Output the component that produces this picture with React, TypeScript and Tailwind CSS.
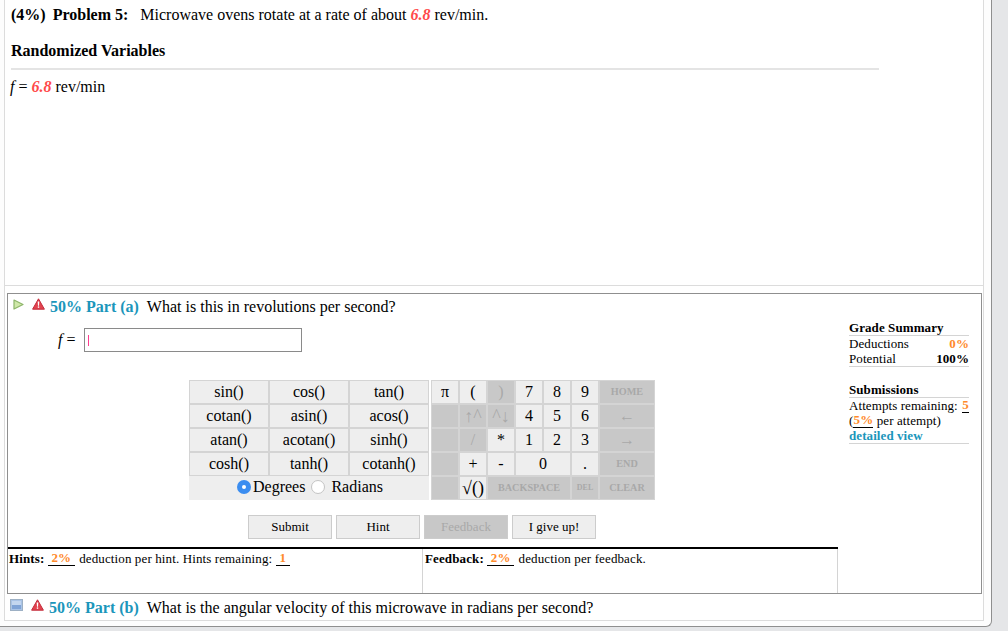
const FUNCS = [
  'sin()', 'cos()', 'tan()',
  'cotan()', 'asin()', 'acos()',
  'atan()', 'acotan()', 'sinh()',
  'cosh()', 'tanh()', 'cotanh()',
];

const KEYS = [
  { label: 'π', on: true },
  { label: '(', on: true },
  { label: ')', on: false },
  { label: '7', on: true },
  { label: '8', on: true },
  { label: '9', on: true },
  { label: 'HOME', on: false, small: true },
  { label: '', on: false },
  { label: '↑^', on: false, big: true },
  { label: '^↓', on: false, big: true },
  { label: '4', on: true },
  { label: '5', on: true },
  { label: '6', on: true },
  { label: '←', on: false },
  { label: '', on: false },
  { label: '/', on: false },
  { label: '*', on: true },
  { label: '1', on: true },
  { label: '2', on: true },
  { label: '3', on: true },
  { label: '→', on: false },
  { label: '', on: false },
  { label: '+', on: true },
  { label: '-', on: true },
  { label: '0', on: true, wide: true },
  { label: '.', on: true },
  { label: 'END', on: false, small: true },
  { label: '', on: false },
  { label: '√()', on: true, big: true },
  { label: 'BACKSPACE', on: false, small: true, span3: true },
  { label: 'DEL', on: false, tiny: true },
  { label: 'CLEAR', on: false, small: true },
];

function PlayIcon() {
  return (
    <svg width="11" height="11" viewBox="0 0 11 11" className="shrink-0 mb-[5px]">
      <path d="M1 1 L10 5.5 L1 10 Z" fill="#cfe8a8" stroke="#8db56a" strokeWidth="1.2" strokeLinejoin="round" />
    </svg>
  );
}

function WarnIcon() {
  return (
    <svg width="13" height="12" viewBox="0 0 13 12" className="block shrink-0">
      <path d="M6.5 0.8 L12.4 11.2 L0.6 11.2 Z" fill="#e2434f" stroke="#c22a3a" strokeWidth="1" strokeLinejoin="round" />
      <path d="M5.7 3.4 H7.3 L7 7.8 H6 Z" fill="#fff" />
      <rect x="5.8" y="8.4" width="1.4" height="1.4" fill="#fff" />
    </svg>
  );
}

function BoxIcon() {
  return (
    <svg width="13" height="12" viewBox="0 0 13 12" className="block shrink-0 mb-[6px]">
      <rect x="0.5" y="0.5" width="12" height="11" fill="#a9c3e6" stroke="#9db0c4" />
      <rect x="2" y="2" width="9" height="4" fill="#c3d6ef" />
      <rect x="2" y="6" width="9" height="4" fill="#7fa3d6" />
    </svg>
  );
}

function Orange({ children }: { children: React.ReactNode }) {
  return <span className="font-bold text-[#ff8a2b]">{children}</span>;
}

function Under({ children, w }: { children: React.ReactNode; w: string }) {
  return (
    <span className={`inline-block h-[15px] border-b border-black text-center font-bold text-[#ff8a2b] leading-[14px] align-top ${w}`}>
      {children}
    </span>
  );
}

function Keypad() {
  return (
    <div className="ml-[181px] mt-[28px] flex gap-[2px]">
      <div className="w-[240px]">
        <div className="grid grid-cols-3">
          {FUNCS.map((f) => (
            <div key={f} className="h-[24px] border border-[#d4d4d4] bg-[#eeeeee] flex items-center justify-center text-[16px] leading-none">
              {f}
            </div>
          ))}
        </div>
        <div className="h-[24px] bg-[#eeeeee] flex items-center justify-center text-[16px] pb-[2px] pl-[2px]">
          <span className="w-[14px] h-[14px] rounded-full bg-[#3b8df0] flex items-center justify-center mr-[2px]">
            <span className="w-[4px] h-[4px] rounded-full bg-white" />
          </span>
          <span>Degrees</span>
          <span className="w-[14px] h-[14px] rounded-full bg-white border border-[#c4c4c4] ml-[6px] mr-[6px]" />
          <span>Radians</span>
        </div>
      </div>
      <div className="w-[224px] grid grid-cols-[28px_28px_28px_28px_28px_28px_56px] auto-rows-[24px]">
        {KEYS.map((k, i) => (
          <div
            key={i}
            className={`border border-[#d4d4d4] flex items-center justify-center leading-none whitespace-nowrap ${k.wide ? 'col-span-2' : ''} ${k.span3 ? 'col-span-3' : ''} ${k.on ? 'bg-[#eeeeee] text-black' : 'bg-[#c8c8c8] text-[#a8a8a8]'} ${k.tiny ? 'text-[8px] font-bold' : k.small ? 'text-[10.2px] font-bold' : k.big ? 'text-[18px]' : 'text-[16px]'}`}
          >
            {k.label}
          </div>
        ))}
      </div>
    </div>
  );
}

function ActionButton({ label, off }: { label: string; off?: boolean }) {
  return (
    <div className={`w-[84px] h-[24px] border border-[#cccccc] flex items-center justify-center text-[13px] ${off ? 'bg-[#c8c8c8] text-[#a8a8a8]' : 'bg-[#eeeeee]'}`}>
      {label}
    </div>
  );
}

export default function App() {
  return (
    <div className="w-[1008px] h-[631px] bg-[#e5e6e8] overflow-hidden font-['Liberation_Serif',serif] text-black">
      <div className="w-[992px] h-[627px] bg-[#fdfdfd] border-r border-b border-[#8f8f8f] rounded-br-[6px] pl-[4px] pr-[7px]">
        <div className="h-[621px] bg-white border-l border-r border-b border-[#dcdcdc]">
          <div className="h-[286px] border-b border-[#dcdcdc] pl-[6px]">
            <p className="pt-[6px] text-[16px] leading-[18px] whitespace-nowrap">
              <b>(4%)</b>
              <b className="ml-[7px]">Problem 5:</b>
              <span className="ml-[12px]">Microwave ovens rotate at a rate of about </span>
              <b className="italic text-[#ff4a4a]">6.8</b> rev/min.
            </p>
            <h2 className="mt-[18px] text-[16px] leading-[18px] font-bold">Randomized Variables</h2>
            <div className="mt-[8px] mr-[104px] h-[2px] bg-[#e4e4e4]" />
            <p className="mt-[8px] ml-[-1px] text-[16px] leading-[18px]">
              <i>f</i> = <b className="italic text-[#ff4a4a]">6.8</b> rev/min
            </p>
          </div>

          <div className="mt-[7px] ml-[2px] mr-[1px] h-[301px] border border-[#8f8f8f] flex">
            <div className="w-[830px] flex flex-col">
              <div className="h-[24px] flex items-center pl-[5px] pt-[2px] text-[16px] whitespace-nowrap">
                <PlayIcon />
                <span className="ml-[8px] mb-[6px]"><WarnIcon /></span>
                <b className="ml-[5px] text-[#1b96bb]">50% Part (a)</b>
                <span className="ml-[8px]">What is this in revolutions per second?</span>
              </div>
              <div className="mt-[10px] flex items-center h-[24px] pl-[50px] text-[16px]">
                <span><i>f</i> =</span>
                <div className="ml-[9px] w-[218px] h-[24px] border border-[#8a8a8a] flex items-center pl-[3px]">
                  <span className="w-px h-[11px] bg-[#ff3d8f]" />
                </div>
              </div>
              <Keypad />
              <div className="mt-[15px] ml-[240px] flex gap-[4px]">
                <ActionButton label="Submit" />
                <ActionButton label="Hint" />
                <ActionButton label="Feedback" off />
                <ActionButton label="I give up!" />
              </div>
              <div className="mt-[8px] flex-1 border-t-[2px] border-black flex text-[13px] leading-[15px] tracking-[0.12px]">
                <div className="w-[415px] pl-[1px] pt-[2px] border-r border-[#d4d4d4] whitespace-nowrap">
                  <b>Hints:</b> <Under w="w-[27px]">2%</Under> <span className="ml-[1px]">deduction per hint. Hints remaining:</span> <Under w="w-[14px]">1</Under>
                </div>
                <div className="flex-1 pl-[2px] pt-[2px] border-r border-[#d4d4d4] whitespace-nowrap">
                  <b>Feedback:</b> <Under w="w-[27px]">2%</Under> <span className="ml-[1px]">deduction per feedback.</span>
                </div>
              </div>
            </div>
            <div className="flex-1 pl-[11px] pr-[12px] pt-[26px] text-[13px] leading-[15px] tracking-[0.08px]">
              <div className="font-bold border-b border-[#d4d4d4]">Grade Summary</div>
              <div className="flex justify-between"><span>Deductions</span><Orange>0%</Orange></div>
              <div className="flex justify-between border-b border-[#d4d4d4]"><span>Potential</span><b>100%</b></div>
              <div className="mt-[15px] font-bold border-b border-[#d4d4d4]">Submissions</div>
              <div className="flex justify-between h-[15px]">
                <span>Attempts remaining:</span><Under w="w-[7px]">5</Under>
              </div>
              <div className="h-[15px]">(<Under w="w-[20px]">5%</Under> per attempt)</div>
              <div className="font-bold text-[#1b96bb] border-b border-[#d4d4d4]">detailed view</div>
            </div>
          </div>

          <div className="h-[27px] flex items-center pl-[5px] text-[16px] whitespace-nowrap">
            <BoxIcon />
            <span className="ml-[8px] mb-[6px]"><WarnIcon /></span>
            <b className="ml-[5px] text-[#1b96bb]">50% Part (b)</b>
            <span className="ml-[8px]">What is the angular velocity of this microwave in radians per second?</span>
          </div>
        </div>
      </div>
    </div>
  );
}
